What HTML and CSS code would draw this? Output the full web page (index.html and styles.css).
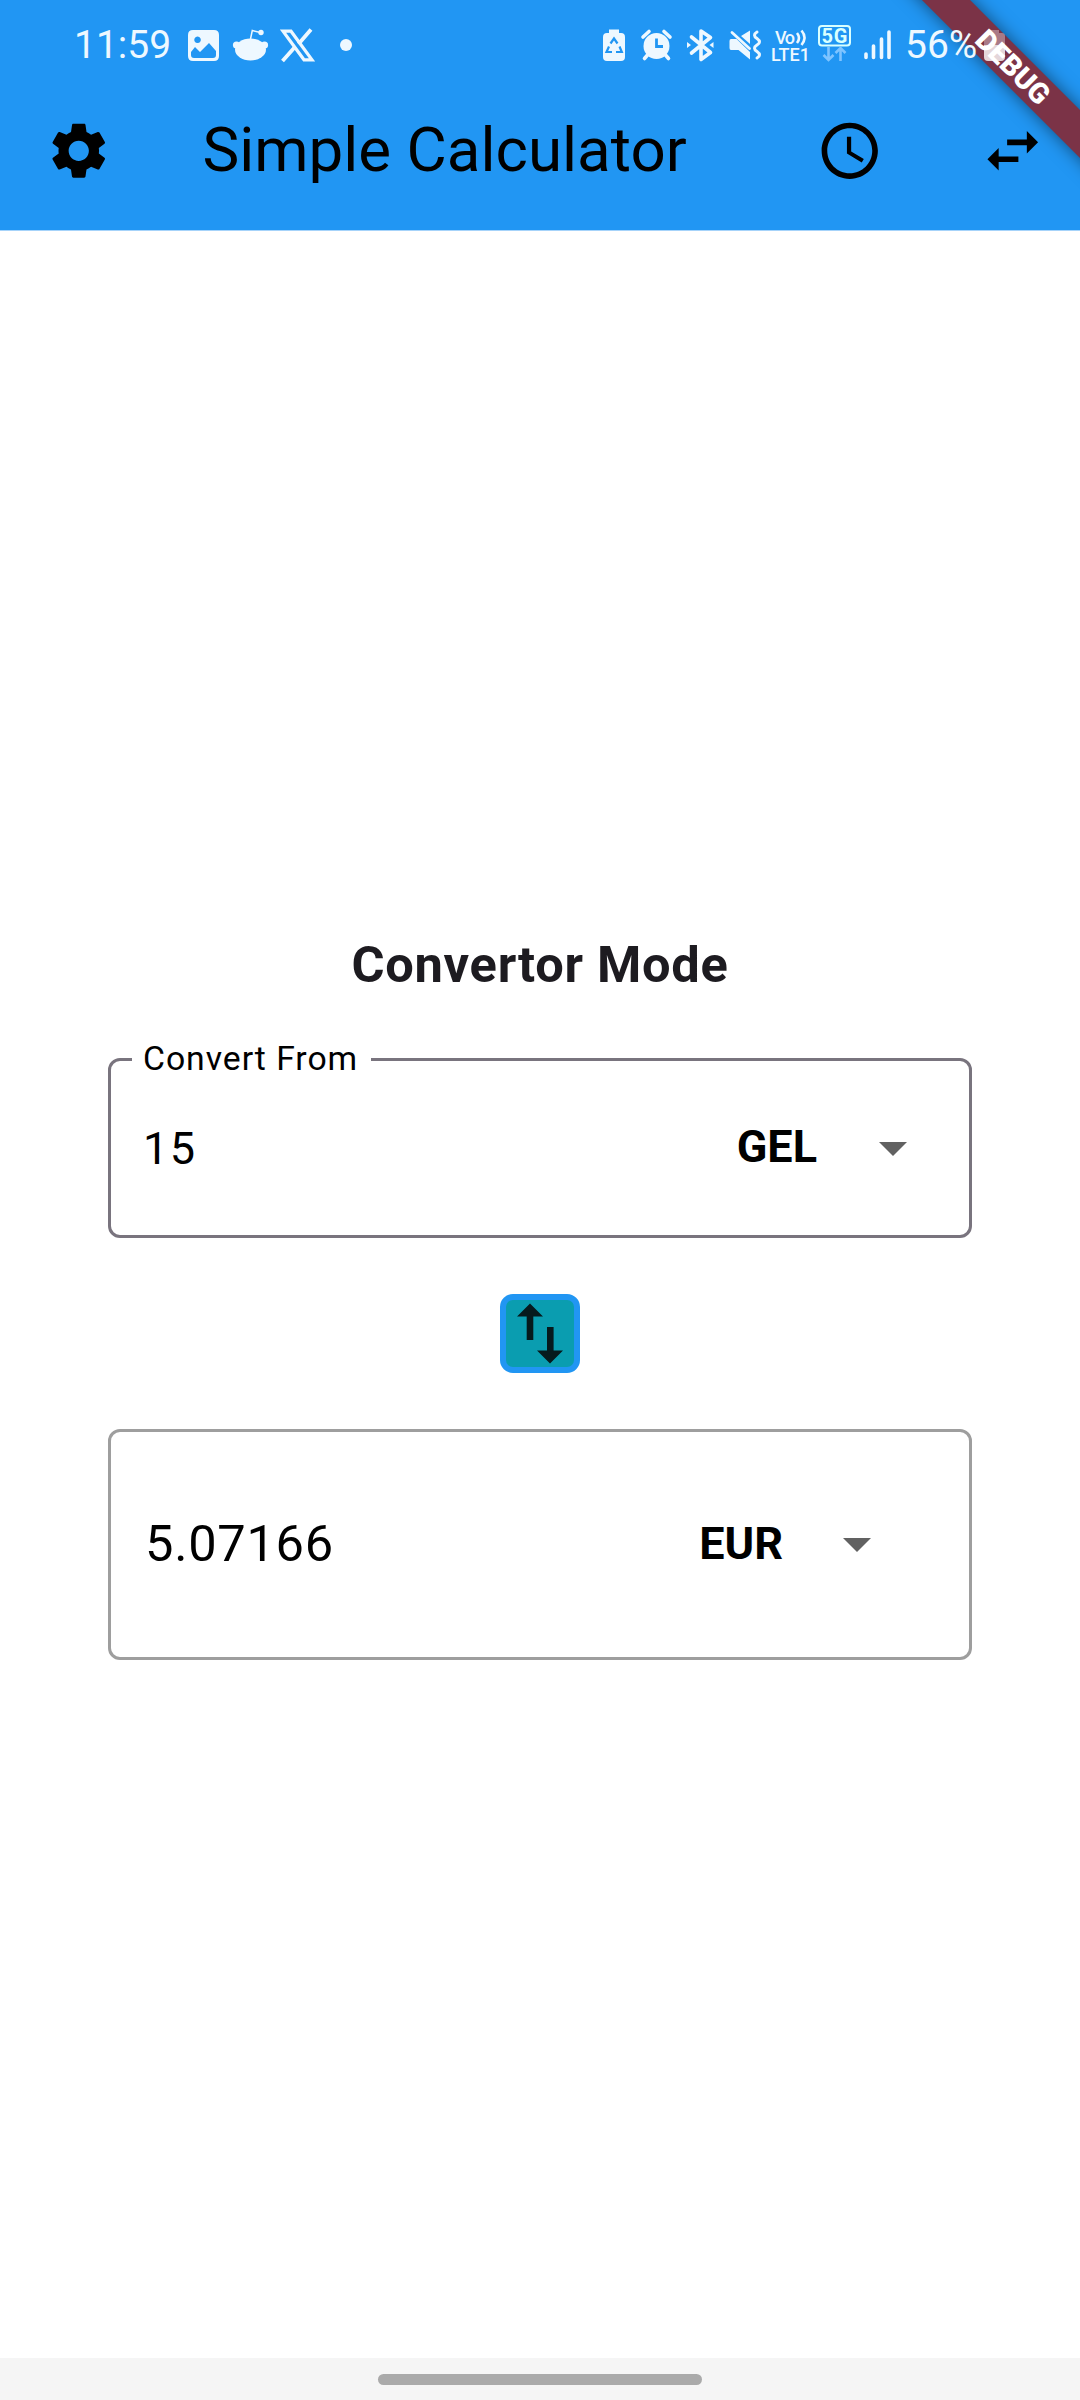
FILE: index.html
```
<!DOCTYPE html>
<html lang="en">
<head>
<meta charset="utf-8">
<title>Simple Calculator</title>
<link rel="stylesheet" href="styles.css">
</head>
<body>
<div class="app">
  <header class="header">
    <div class="banner">DEBUG</div>
    <div class="status">
      <span class="clock">11:59</span>
      <svg class="st-left" width="170" height="40" viewBox="184 25 170 40" fill="#eef8ff">
        <path fill-rule="evenodd" d="M193 30h21q5 0 5 5v21q0 5-5 5h-21q-5 0-5-5V35q0-5 5-5zM191 52v3q0 3 3 3h19q3 0 3-3v-4l-7-8-9 9-5-5zM197.500 36.500a3.300 3.300 0 1 0 .1 0z"/>
        <ellipse cx="250.500" cy="49.500" rx="15.500" ry="11"/><circle cx="236.500" cy="45" r="3.600"/><circle cx="264.500" cy="45" r="3.600"/>
        <path d="M250.500 39l1.800-8.500 8 2" fill="none" stroke="#eef8ff" stroke-width="1.500"/><circle cx="261" cy="32.500" r="2.700"/>
        <path d="M283 31.200h8l21 28.600h-8z" fill="none" stroke="#eef8ff" stroke-width="3.200"/>
        <path d="M311 29.500l-12.500 14.500M294.500 47.500l-12 13.500" fill="none" stroke="#eef8ff" stroke-width="3.800"/>
        <circle cx="346" cy="45" r="6"/>
      </svg>
      <svg class="st-right" width="290" height="44" viewBox="602 23 290 44" fill="#eef8ff">
        <path d="M609 29.500h10V33h2q4 0 4 4v20q0 4-4 4h-14q-4 0-4-4V37q0-4 4-4h2z"/>
        <path d="M610.500 43.500l3.500-5 3.500 5M619.500 46.500l2.300 5.500H616M612 52h-5.500l2.500-5.500" fill="none" stroke="#2196f3" stroke-width="2.200"/>
        <circle cx="656.500" cy="46" r="13"/>
        <path d="M643 37l6-5.500M670 37l-6-5.500M647.500 55l-3 3.500M665.500 55l3 3.500" stroke="#eef8ff" stroke-width="3.600" stroke-linecap="round"/>
        <path d="M656.500 38.500v8h6.500" fill="none" stroke="#2196f3" stroke-width="2.800"/>
        <path d="M691.500 37l19 15.500-9.500 7V31l9.500 6.500-19 15.500" fill="none" stroke="#eef8ff" stroke-width="3.600" stroke-linejoin="round" stroke-linecap="round"/>
        <path d="M687 42l4 3-4 3zM713.500 42l-4 3 4 3z"/>
        <path d="M731 39h5.500L750 52v7.500L738.500 50H731q-1.500 0-1.500-2v-7q0-2 1.500-2zM741 36l9-5.500V44z"/>
        <path d="M732 32.500l17.500 16" stroke="#eef8ff" stroke-width="2.800" stroke-linecap="round"/>
        <path d="M757 32q-5 3 0 6.500t0 6.500 0 6.500 0 6.500" fill="none" stroke="#eef8ff" stroke-width="3" stroke-linecap="round"/>
        <text class="net" x="775" y="43.500" textLength="20">Vo</text>
        <path d="M797 33q4 5 0 10M801.500 30.500q6 7 0 14.500" fill="none" stroke="#eef8ff" stroke-width="2.600"/>
        <text class="net" x="771" y="60.500" textLength="39">LTE1</text>
        <rect x="819" y="26" width="31" height="19.500" rx="3" fill="none" stroke="#d8ffff" stroke-width="2"/>
        <text class="net gen" x="821.500" y="42.500" textLength="26">5G</text>
        <path d="M828.500 47v13M823.500 55l5 5 5-5M840.500 61V48M835.500 53l5-5 5 5" fill="none" stroke="#7fc4ff" stroke-width="2.600"/>
        <path d="M866 54v3.500M873.500 46v11.500M881.500 39v18.500M889 32v25.500" stroke="#eef8ff" stroke-width="3.600" stroke-linecap="round"/>
      </svg>
      <span class="percent">56%</span>
      <svg class="battery" width="21" height="31" viewBox="0 0 21 31" fill="#fff"><path fill-opacity=".35" d="M6 0h9v3h3q3 0 3 3v9H0V6q0-3 3-3h3z"/><path fill-opacity=".8" d="M0 15h21v12q0 4-4 4H4q-4 0-4-4z"/></svg>
    </div>
    <div class="toolbar">
      <svg class="icon gear" viewBox="0 0 24 24"><path d="M19.140 12.940c.04-.3.06-.61.06-.94 0-.32-.02-.64-.07-.94l2.030-1.580c.18-.14.23-.41.12-.61l-1.920-3.320c-.12-.22-.37-.29-.59-.22l-2.390.96c-.5-.38-1.030-.7-1.620-.94l-.36-2.540c-.04-.24-.24-.41-.48-.41h-3.840c-.24 0-.43.17-.47.41l-.36 2.540c-.59.24-1.130.57-1.620.94l-2.390-.96c-.22-.08-.47 0-.59.22L2.740 8.870c-.12.21-.08.47.12.61l2.030 1.580c-.05.3-.09.63-.09.94s.02.64.07.94l-2.030 1.580c-.18.14-.23.41-.12.61l1.920 3.320c.12.22.37.29.59.22l2.390-.96c.5.38 1.030.7 1.620.94l.36 2.540c.05.24.24.41.48.41h3.840c.24 0 .44-.17.47-.41l.36-2.540c.59-.24 1.130-.56 1.620-.94l2.390.96c.22.08.47 0 .59-.22l1.920-3.320c.12-.22.07-.47-.12-.61l-2.010-1.580zM12 15.600c-1.980 0-3.600-1.620-3.600-3.600s1.620-3.600 3.600-3.600 3.600 1.620 3.600 3.600-1.620 3.600-3.600 3.600z"/></svg>
      <h1 class="title">Simple Calculator</h1>
      <svg class="icon history" viewBox="0 0 24 24"><path d="M11.990 2C6.470 2 2 6.480 2 12s4.470 10 9.990 10C17.520 22 22 17.520 22 12S17.520 2 11.990 2zM12 20c-4.420 0-8-3.580-8-8s3.580-8 8-8 8 3.580 8 8-3.580 8-8 8zm.5-13H11v6l5.250 3.150.75-1.230-4.500-2.670z"/></svg>
      <svg class="icon" viewBox="0 0 24 24"><path d="M6.990 11L3 15l3.990 4v-3H14v-2H6.990v-3zM21 9l-3.990-4v3H10v2h7.010v3L21 9z"/></svg>
    </div>
  </header>
  <main class="content">
    <h2 class="mode">Convertor Mode</h2>
    <section class="field from">
      <span class="label">Convert From</span>
      <span class="amount">15</span>
      <span class="currency">GEL</span>
      <svg class="caret" viewBox="0 0 28 14"><path d="M0 0h28L14 14z"/></svg>
    </section>
    <button class="swap" aria-label="Swap currencies">
      <svg width="68" height="67" viewBox="0 0 68 67"><path d="M24 3.500l13 13h-9.700V40h-6.600V16.500H11zM41 27h6.600v23.500H57L44 63.500l-13-13h10z"/></svg>
    </button>
    <section class="field to">
      <span class="amount">5.07166</span>
      <span class="currency">EUR</span>
      <svg class="caret" viewBox="0 0 28 14"><path d="M0 0h28L14 14z"/></svg>
    </section>
  </main>
  <footer class="nav"><div class="pill"></div></footer>
</div>
</body>
</html>
```
FILE: styles.css
```
* { box-sizing: border-box; }
body { margin: 0; font-family: Roboto, sans-serif; color: #000; background: #fff; }
h1, h2 { margin: 0; }
svg { display: block; flex: none; }
.app { width: 1080px; height: 2400px; display: flex; flex-direction: column; }

.header { position: relative; height: 230px; flex: none; background: #2196f3; box-shadow: 0 1px 0 #a6d3fa; }
.status { position: relative; display: flex; height: 72px; padding-left: 74px; color: #eef8ff; }
.clock, .percent { line-height: 90px; font-size: 39px; white-space: nowrap; }
.clock { width: 110px; }
.st-left { margin-top: 25px; }
.st-right { margin: 23px 0 0 248px; }
.percent { width: 79px; margin-left: 13px; }
.battery { margin-top: 30px; }
.net { font: 500 18px Roboto, sans-serif; }
.gen { font-size: 20px; font-weight: 700; fill: #d8ffff; }
.app { overflow: hidden; }
.banner {
  position: absolute; left: 813px; top: 50px; width: 400px; height: 34px;
  transform: rotate(45deg); background: #7b3347; color: #fff;
  box-shadow: 0 0 17px rgba(0, 0, 0, .5);
  font-size: 28.700px; font-weight: 900; line-height: 34px; text-align: center;
}
.toolbar { display: flex; align-items: center; height: 158px; padding: 0 34px 0 45px; }
.icon { width: 67.500px; height: 67.500px; }
.title { flex: 1; margin-left: 90px; padding-bottom: 3px; font-size: 61.900px; font-weight: 400; line-height: 76px; white-space: nowrap; }
.history { margin-right: 95px; }

.content { flex: 1; display: flex; flex-direction: column; align-items: center; padding-top: 699px; }
.mode { height: 72px; line-height: 72px; font-size: 50.600px; font-weight: 700; letter-spacing: .7px; color: #1d1b20; }
.field { position: relative; display: flex; align-items: center; width: 864px; border: 3px solid #79747e; border-radius: 12px; }
.from { height: 180px; margin-top: 57px; padding: 0 62px 0 32px; }
.to { height: 231px; margin-top: 56px; padding: 0 98px 0 34px; border-color: #9e9e9e; }
.label { position: absolute; left: 21px; top: -22px; padding: 0 13px 0 11px; background: #fff; font-size: 33.750px; line-height: 40px; letter-spacing: .95px; white-space: nowrap; }
.amount { flex: 1; font-size: 45px; letter-spacing: 1.400px; }
.to .amount { padding-bottom: 3px; font-size: 50.600px; letter-spacing: .7px; }
.currency { padding-bottom: 3px; font-size: 45px; font-weight: 700; }
.caret { width: 28px; height: 14px; margin: 2px 0 0 62px; fill: #616161; }
.to .caret { margin: 0 0 0 60px; }
.swap { width: 80px; height: 79px; margin-top: 56px; padding: 0; border: 6px solid #2196f3; border-radius: 13px; background: #0a9db0; }
.swap svg { fill: #061a1d; }

.nav { display: flex; justify-content: center; height: 42px; flex: none; padding-top: 16px; background: #f5f5f5; }
.pill { width: 324px; height: 11px; border-radius: 6px; background: #aaa; }
```
